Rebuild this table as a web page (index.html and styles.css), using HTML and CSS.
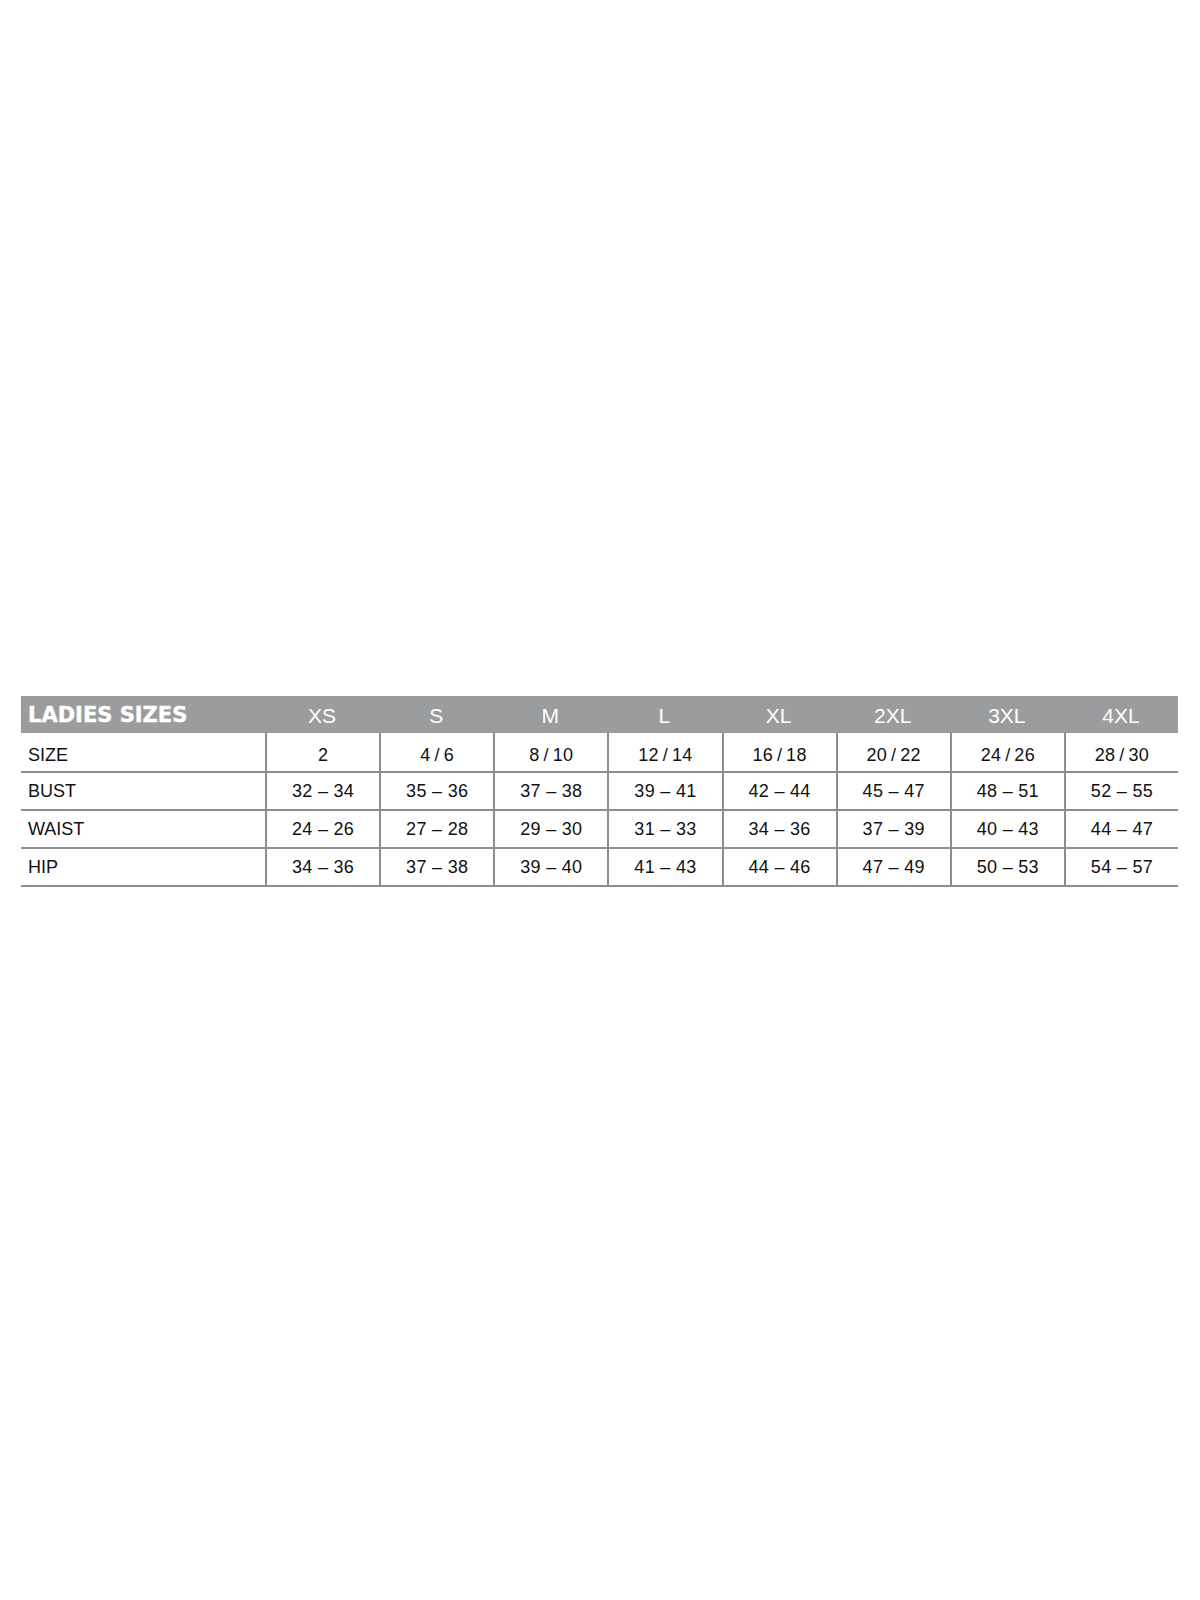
FILE: index.html
```html
<!DOCTYPE html>
<html lang="en">
<head>
<meta charset="utf-8">
<title>Ladies Sizes</title>
<link rel="stylesheet" href="styles.css">
</head>
<body>
<div class="page">
  <div class="chart">
    <div class="row head">
      <div class="cell label title">LADIES SIZES</div>
      <div class="cell">XS</div>
      <div class="cell">S</div>
      <div class="cell">M</div>
      <div class="cell">L</div>
      <div class="cell">XL</div>
      <div class="cell">2XL</div>
      <div class="cell">3XL</div>
      <div class="cell">4XL</div>
    </div>
    <div class="row body first">
      <div class="cell label">SIZE</div>
      <div class="cell val">2</div>
      <div class="cell val">4&#8201;/&#8201;6</div>
      <div class="cell val">8&#8201;/&#8201;10</div>
      <div class="cell val">12&#8201;/&#8201;14</div>
      <div class="cell val">16&#8201;/&#8201;18</div>
      <div class="cell val">20&#8201;/&#8201;22</div>
      <div class="cell val">24&#8201;/&#8201;26</div>
      <div class="cell val">28&#8201;/&#8201;30</div>
    </div>
    <div class="row body">
      <div class="cell label">BUST</div>
      <div class="cell val">32 – 34</div>
      <div class="cell val">35 – 36</div>
      <div class="cell val">37 – 38</div>
      <div class="cell val">39 – 41</div>
      <div class="cell val">42 – 44</div>
      <div class="cell val">45 – 47</div>
      <div class="cell val">48 – 51</div>
      <div class="cell val">52 – 55</div>
    </div>
    <div class="row body">
      <div class="cell label">WAIST</div>
      <div class="cell val">24 – 26</div>
      <div class="cell val">27 – 28</div>
      <div class="cell val">29 – 30</div>
      <div class="cell val">31 – 33</div>
      <div class="cell val">34 – 36</div>
      <div class="cell val">37 – 39</div>
      <div class="cell val">40 – 43</div>
      <div class="cell val">44 – 47</div>
    </div>
    <div class="row body">
      <div class="cell label">HIP</div>
      <div class="cell val">34 – 36</div>
      <div class="cell val">37 – 38</div>
      <div class="cell val">39 – 40</div>
      <div class="cell val">41 – 43</div>
      <div class="cell val">44 – 46</div>
      <div class="cell val">47 – 49</div>
      <div class="cell val">50 – 53</div>
      <div class="cell val">54 – 57</div>
    </div>
  </div>
</div>
</body>
</html>
```
FILE: styles.css
```css
html, body {
  margin: 0;
  padding: 0;
  background: #ffffff;
}

.page {
  padding: 696px 22px 0 21px;
  font-family: "Liberation Sans", Arial, sans-serif;
  color: #111111;
}

.chart {
  width: 1157px;
}

.row {
  display: grid;
  grid-template-columns: 244px repeat(8, 1fr);
}

.cell {
  text-align: center;
  white-space: nowrap;
}

.label {
  text-align: left;
  padding-left: 7px;
}

.head {
  background: #9b9c9e;
  color: #ffffff;
  height: 37px;
  font-size: 21px;
}

.head .cell {
  padding-top: 2px;
  line-height: 35px;
}

.head .title {
  font-family: "DejaVu Sans", "Liberation Sans", sans-serif;
  font-weight: bold;
  font-size: 21px;
  padding-left: 7px;
  -webkit-text-stroke: 0.4px #ffffff;
}

.body {
  border-bottom: 2px solid #8d8d8d;
  font-size: 18px;
}

.body .cell {
  line-height: 36px;
  letter-spacing: 0.3px;
}

.body .label {
  letter-spacing: 0;
}

.body.first .cell {
  padding-top: 7px;
  line-height: 31px;
}

.val {
  border-left: 2px solid #8d8d8d;
}
```
